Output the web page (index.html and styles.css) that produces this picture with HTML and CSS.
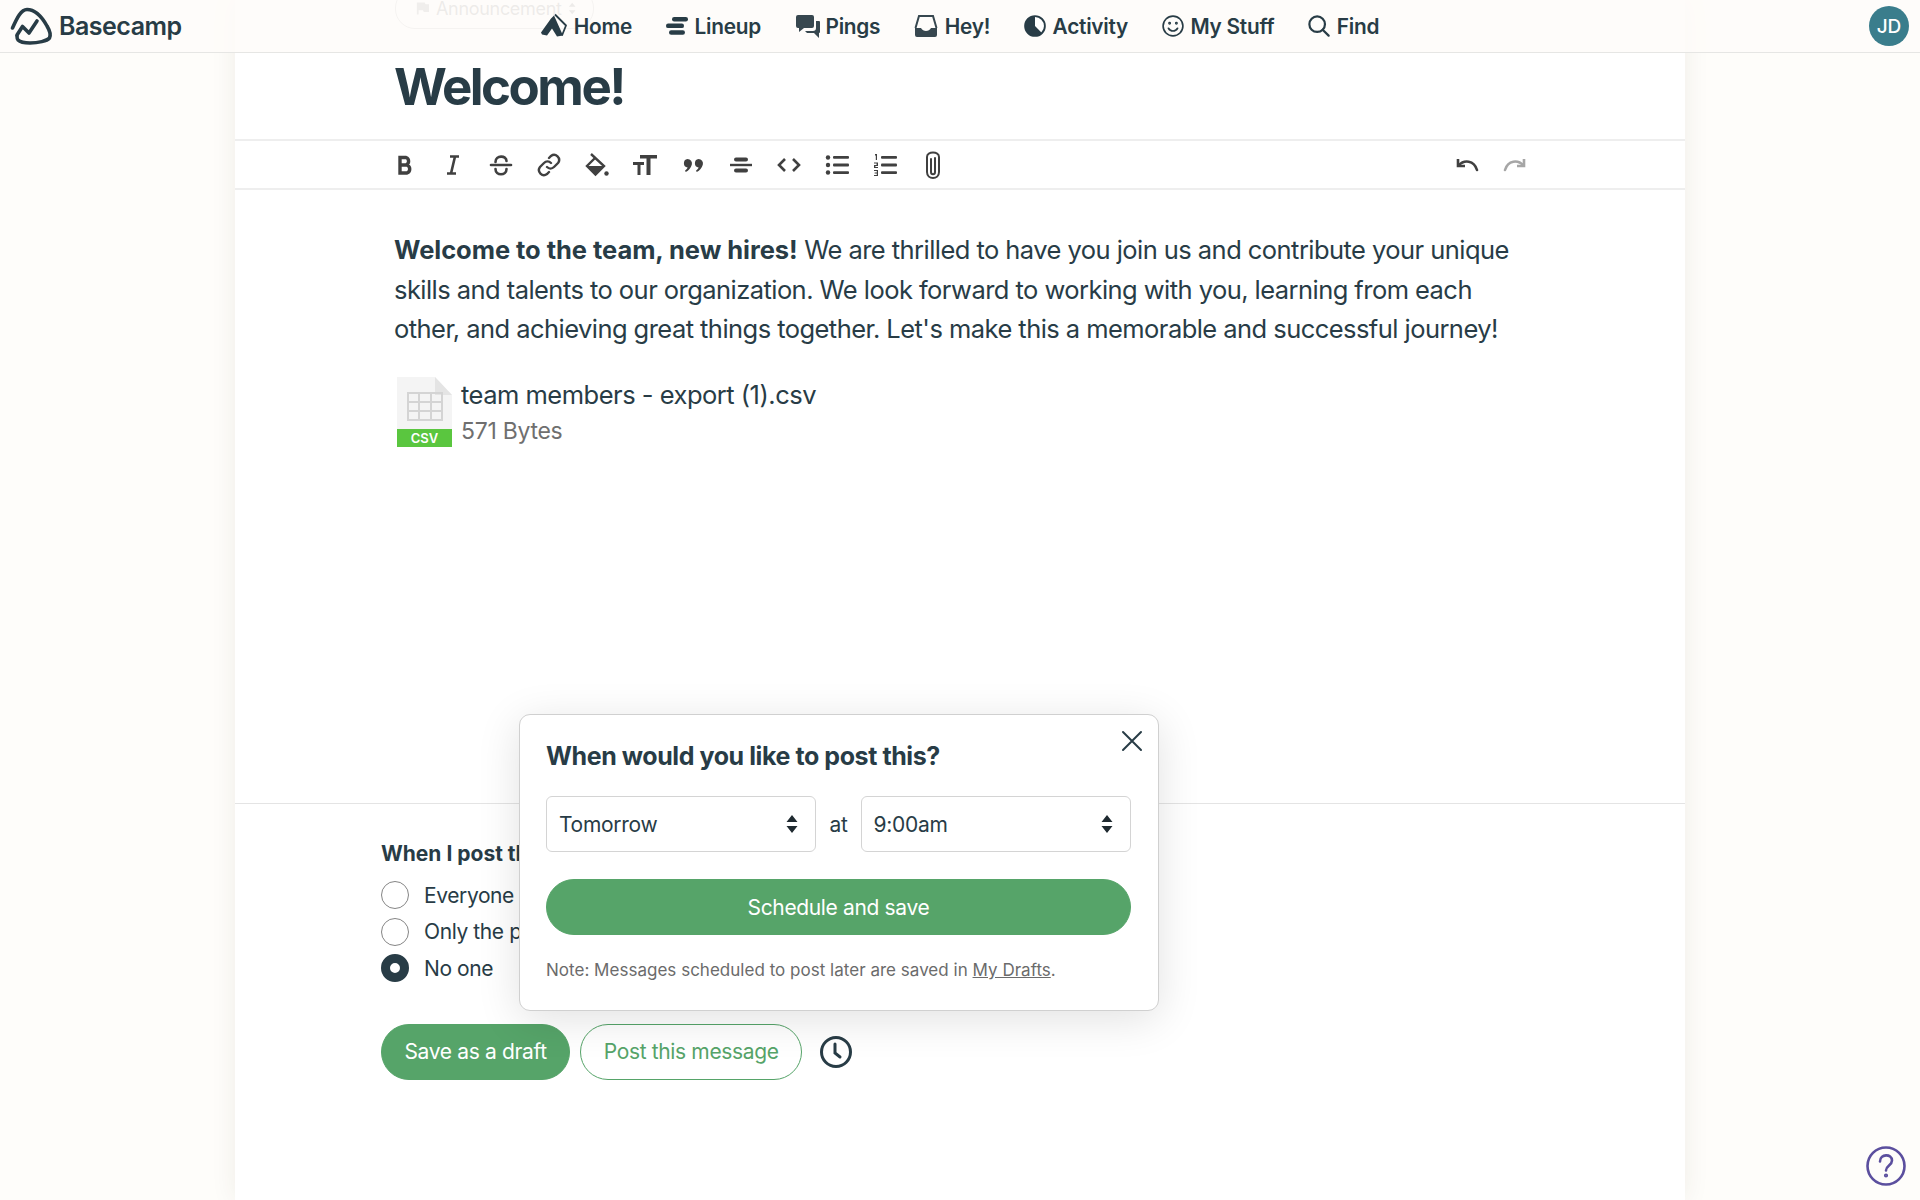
FILE: index.html
```html
<!DOCTYPE html>
<html>
  <head>
    <title>Welcome! - Basecamp</title>
    <link rel="stylesheet" href="styles.css">
  </head>
  <body>
    <header class="nav">
      <a class="brand">
        <svg class="brand-logo" viewBox="10 7 45 38" fill="none" stroke="#283c46" stroke-width="3.600" stroke-linecap="round" stroke-linejoin="round">
          <path d="M12.500 28C17 18 21 9.500 27 9.500c8 0 15 7.500 20 16.500 3 5 4 9 2.500 12-2.500 3-11.500 5-19.500 5-6 0-10-1-12-3-1-1-1-3-1-4"/>
          <path d="M17 35l5.500-8.500L29 33l8-12"/>
        </svg>
        <span>Basecamp</span>
      </a>
      <nav class="nav-items">
        <a class="nav-item">
          <svg viewBox="11 9.500 26 24" width="26" height="26"><path fill="#283c46" d="M11 28l10-14 3-3 9 20-6 1-5-8-5 7-5-1z"/><path fill="none" stroke="#283c46" stroke-width="1.800" stroke-linejoin="round" d="M25 10l11 11-4 10"/></svg>
          Home
        </a>
        <a class="nav-item">
          <svg viewBox="0 0 22 20" width="22" height="20" fill="#283c46"><rect x="6" y="1" width="16" height="4.500" rx="2.200"/><rect x="0" y="7.600" width="18" height="4.500" rx="2.200"/><rect x="3" y="14.200" width="16" height="4.500" rx="2.200"/></svg>
          Lineup
        </a>
        <a class="nav-item nav-item-tight">
          <svg viewBox="0 0 26 26" width="26" height="26" fill="#37474f"><path d="M3 2h14a2 2 0 0 1 2 2v9a2 2 0 0 1-2 2H9l-5 4v-4H3a2 2 0 0 1-2-2V4a2 2 0 0 1 2-2z"/><path d="M21 8h3a1 1 0 0 1 1 1v10a1 1 0 0 1-1 1v5l-5-5h-7l-2-2h8a3 3 0 0 0 3-3z"/></svg>
          Pings
        </a>
        <a class="nav-item">
          <svg viewBox="0 0 24 24" width="24" height="24"><path fill="#37474f" d="M1 14h6c1 2 3 3 5 3s4-1 5-3h6v7a2 2 0 0 1-2 2H3a2 2 0 0 1-2-2z"/><path fill="none" stroke="#37474f" stroke-width="2" d="M1.500 14L5 2h14l3.500 12"/></svg>
          Hey!
        </a>
        <a class="nav-item">
          <svg viewBox="0 0 24 24" width="22" height="22"><circle cx="12" cy="12" r="10.800" fill="#fff" stroke="#283c46" stroke-width="2"/><path fill="#283c46" d="M12 1a11 11 0 1 0 7.800 18.800L12 12z"/></svg>
          Activity
        </a>
        <a class="nav-item">
          <svg viewBox="0 0 24 24" width="22" height="22" fill="none" stroke="#283c46" stroke-width="1.800" stroke-linecap="round"><circle cx="12" cy="12" r="10.800"/><path d="M7 14.500c1.200 2 3 3 5 3s3.800-1 5-3"/><circle cx="8.300" cy="9" r=".7"/><circle cx="15.700" cy="9" r=".7"/></svg>
          My Stuff
        </a>
        <a class="nav-item">
          <svg viewBox="0 0 24 24" width="22" height="22" fill="none" stroke="#283c46" stroke-width="2.400" stroke-linecap="round"><circle cx="10" cy="10" r="8.500"/><path d="M16 16l6.500 6.500"/></svg>
          Find
        </a>
      </nav>
      <div class="nav-end">
        <span class="avatar">JD</span>
      </div>
    </header>

    <main class="card">
      <div class="pill">
        <svg viewBox="0 0 16 16" width="15" height="15" fill="#999"><path d="M1 1h9l1 2h4v9H9l-1-2H3v5H1z"/></svg>
        <span>Announcement</span>
        <svg class="pill-arrows" viewBox="0 0 10 16" width="9" height="15" fill="#888"><path d="M5 1l4 5H1zM5 15L1 10h8z"/></svg>
      </div>

      <h1 class="title">Welcome!</h1>

      <div class="toolbar">
        <div class="tool-group">
          <span class="tool"><svg viewBox="0 0 24 24"><path fill="none" stroke="#404040" stroke-width="3.400" d="M7 4.500h6a4 4 0 0 1 0 7.500H7zM7 12h7a4.300 4.300 0 0 1 0 8H7zM7 3v18.500"/></svg></span>
          <span class="tool"><svg viewBox="0 0 24 24"><path fill="none" stroke="#404040" stroke-width="2.600" d="M9 3.500h9M6 20.500h9M14 3.500l-4 17"/></svg></span>
          <span class="tool"><svg viewBox="0 0 24 24" fill="none" stroke="#404040" stroke-width="2.600" stroke-linecap="round"><path d="M2 12h20"/><path d="M6.500 9C6.500 2 17.500 2 17.500 8M6.500 16c0 7 11 7 11 0"/></svg></span>
          <span class="tool"><svg viewBox="0 0 24 24" fill="none" stroke="#404040" stroke-width="2.400" stroke-linecap="round"><path d="M10 14a5 5 0 0 0 7 0l4-4a5 5 0 0 0-7-7l-2 2"/><path d="M14 10a5 5 0 0 0-7 0l-4 4a5 5 0 0 0 7 7l2-2"/></svg></span>
          <span class="tool"><svg viewBox="0 0 24 24"><path fill="none" stroke="#404040" stroke-width="2.400" d="M6 1l13 12-8.500 8.500L2 13 10 5"/><path fill="#404040" d="M2 13h17l-8.500 8.800z"/><circle cx="21.500" cy="20.500" r="2.200" fill="#404040"/></svg></span>
          <span class="tool"><svg viewBox="0 0 24 24" fill="#404040"><path d="M7 2h17v3.500h-6.500V22h-4V5.500H7z"/><path d="M0 9h11v3H7.500v10h-3V12H0z"/></svg></span>
          <span class="tool"><svg viewBox="0 0 24 24" fill="#404040"><path d="M6.500 6a4.500 4.500 0 0 1 4.300 5.800C9.800 15 7.800 17.500 4.800 19l-.8-1.300c1.500-1.200 2.300-2.300 2.600-3.200A4.300 4.300 0 0 1 6.500 6z"/><path d="M17.500 6a4.500 4.500 0 0 1 4.300 5.800c-1 3.200-3 5.700-6 7.200l-.8-1.300c1.500-1.200 2.300-2.300 2.600-3.200a4.300 4.300 0 0 1-.1-8.500z"/></svg></span>
          <span class="tool"><svg viewBox="0 0 24 24" fill="#404040"><rect x="5" y="4.500" width="14" height="4" rx="2"/><rect x="1" y="10.800" width="22" height="2.400"/><rect x="5" y="15.500" width="14" height="4" rx="2"/></svg></span>
          <span class="tool"><svg viewBox="0 0 24 24" fill="none" stroke="#404040" stroke-width="2.600"><path d="M8 6l-6 6 6 6M16 6l6 6-6 6"/></svg></span>
          <span class="tool"><svg viewBox="0 0 24 24" fill="#404040"><circle cx="3" cy="4.500" r="2.200"/><circle cx="3" cy="12" r="2.200"/><circle cx="3" cy="19.500" r="2.200"/><rect x="8" y="3" width="16" height="2.800" rx="1"/><rect x="8" y="10.600" width="16" height="2.800" rx="1"/><rect x="8" y="18.200" width="16" height="2.800" rx="1"/></svg></span>
          <span class="tool"><svg viewBox="0 0 24 24" fill="#404040"><rect x="8" y="3" width="16" height="2.800" rx="1"/><rect x="8" y="10.600" width="16" height="2.800" rx="1"/><rect x="8" y="18.200" width="16" height="2.800" rx="1"/><path d="M2 1h2v6H2.800V2.400H2zM1 9.500h4v3.400H2.400v1.200H5v1H1v-3h2.600v-1.600H1zM1 17h4v6H1v-1h2.800v-1.600H1.600v-.8h2.200V18H1z"/></svg></span>
          <span class="tool"><svg viewBox="0 0 24 28" class="tool-tall" fill="none" stroke="#404040" stroke-width="2" stroke-linecap="round"><path d="M6 6v15c0 8 12 8 12 0V6c0-6-12-6-12 0z"/><path d="M10 8v13c0 3 4 3 4 0V7"/></svg></span>
        </div>
        <div class="tool-group">
          <span class="tool"><svg viewBox="0 0 24 24" fill="none" stroke="#404040" stroke-width="2.600"><path d="M3 6v7h7"/><path stroke-linecap="round" d="M3.500 12.500C9 6.500 19 7 22 17"/></svg></span>
          <span class="tool"><svg viewBox="0 0 24 24" fill="none" stroke="#a6a6a6" stroke-width="2.600"><path d="M21 6v7h-7"/><path stroke-linecap="round" d="M20.500 12.500C15 6.500 5 7 2 17"/></svg></span>
        </div>
      </div>

      <section class="editor">
        <p class="lead"><b>Welcome to the team, new hires!</b> We are thrilled to have you join us and contribute your unique skills and talents to our organization. We look forward to working with you, learning from each other, and achieving great things together. Let's make this a memorable and successful journey!</p>
        <div class="attachment">
          <div class="file-icon">
            <svg viewBox="0 0 55 70" width="55" height="70">
              <path fill="#f4f4f4" d="M0 0h38l17 18v34H0z"/>
              <path fill="#e4e4e4" d="M38 0l17 18H38z"/>
              <path fill="none" stroke="#d4d4d4" stroke-width="2" d="M11 16h34v27H11zM11 25h34M11 34h34M22 16v27M34 16v27"/>
              <rect y="52" width="55" height="18" fill="#5ac63f"/>
            </svg>
            <span class="file-ext">CSV</span>
          </div>
          <div class="file-meta">
            <div class="file-name">team members - export (1).csv</div>
            <div class="file-size">571 Bytes</div>
          </div>
        </div>
      </section>

      <section class="options">
        <h3 class="options-title">When I post this, notify…</h3>
        <label class="radio"><span class="radio-dot"></span>Everyone who can see this</label>
        <label class="radio"><span class="radio-dot"></span>Only the people I select</label>
        <label class="radio"><span class="radio-dot is-on"></span>No one</label>
        <div class="actions">
          <button class="btn btn-solid">Save as a draft</button>
          <button class="btn btn-line">Post this message</button>
          <svg class="clock" viewBox="0 0 32 32" width="32" height="32" fill="none" stroke="#283c46" stroke-width="3" stroke-linecap="round"><circle cx="16" cy="16" r="14.500"/><path d="M15 8v9l5 4"/></svg>
        </div>
      </section>
    </main>

    <div class="popover">
      <svg class="close" viewBox="0 0 22 22" width="22" height="22" fill="none" stroke="#283c46" stroke-width="2" stroke-linecap="round"><path d="M2 2l18 18M20 2L2 20"/></svg>
      <h2 class="popover-title">When would you like to post this?</h2>
      <div class="when">
        <div class="select">Tomorrow<svg viewBox="0 0 12 20" width="12" height="20" fill="#1f2a30"><path d="M6 1l5.500 7H.5zM6 19L.5 12h11z"/></svg></div>
        <span>at</span>
        <div class="select">9:00am<svg viewBox="0 0 12 20" width="12" height="20" fill="#1f2a30"><path d="M6 1l5.500 7H.5zM6 19L.5 12h11z"/></svg></div>
      </div>
      <button class="btn btn-solid btn-wide">Schedule and save</button>
      <p class="note">Note: Messages scheduled to post later are saved in <a>My Drafts</a>.</p>
    </div>

    <svg class="help" viewBox="0 0 40 40" width="40" height="40" fill="none" stroke="#5b4f9e" stroke-width="2.600" stroke-linecap="round"><circle cx="20" cy="20" r="18.500"/><path d="M14 15.500c0-8 12-8 12-1 0 5-6 5-6 10"/><circle cx="20" cy="29.500" r=".8" fill="#5b4f9e"/></svg>
  </body>
</html>
```

FILE: styles.css
```css
* {
  box-sizing: border-box;
}

body {
  margin: 0;
  height: 1200px;
  overflow: hidden;
  position: relative;
  background: #fefdfa;
  color: #283c46;
  font-family: Inter, "Liberation Sans", sans-serif;
}

.nav {
  position: absolute;
  top: 0;
  left: 0;
  right: 0;
  z-index: 5;
  height: 53px;
  display: grid;
  grid-template-columns: 1fr auto 1fr;
  align-items: center;
  background: rgba(254, 252, 249, 0.86);
  border-bottom: 1px solid #e6e6e4;
}

.brand {
  display: flex;
  align-items: center;
  gap: 4px;
  padding-left: 10px;
  font-size: 25px;
  font-weight: 600;
  letter-spacing: -0.5px;
}

.brand-logo {
  width: 45px;
  height: 38px;
}

.nav-items {
  display: flex;
  align-items: center;
  gap: 33.500px;
}

.nav-item {
  display: flex;
  align-items: center;
  gap: 7px;
  font-size: 20.800px;
  font-weight: 600;
  letter-spacing: -0.25px;
}

.nav-item-tight {
  gap: 5px;
}

.nav-end {
  display: flex;
  justify-content: flex-end;
  padding-right: 11px;
}

.avatar {
  width: 40px;
  height: 40px;
  border-radius: 50%;
  background: #3a7d8c;
  color: #fff;
  display: flex;
  align-items: center;
  justify-content: center;
  font-size: 19px;
  font-weight: 500;
}

.card {
  width: 1450px;
  height: 1200px;
  margin: 0 auto;
  background: #fff;
  box-shadow: 0 0 24px rgba(60, 50, 30, 0.08);
}

.pill {
  position: absolute;
  top: -12px;
  left: 395px;
  width: 199px;
  height: 41px;
  padding: 0 17px 0 20px;
  display: flex;
  align-items: center;
  gap: 6px;
  border: 1px solid #bbb;
  border-radius: 20px;
  color: #888;
  font-size: 18px;
  letter-spacing: -0.3px;
}

.pill-arrows {
  margin-left: auto;
}

.title {
  margin: 0;
  padding: 54px 0 0 159px;
  height: 139px;
  font-size: 51px;
  line-height: 66px;
  font-weight: 700;
  letter-spacing: -2.500px;
}

.toolbar {
  height: 51px;
  padding: 0 146px;
  display: flex;
  justify-content: space-between;
  align-items: center;
  border-top: 2px solid #eeeeee;
  border-bottom: 2px solid #eeeeee;
}

.tool-group {
  display: flex;
}

.tool {
  width: 48px;
  height: 46px;
  display: flex;
  align-items: center;
  justify-content: center;
}

.tool svg {
  width: 24px;
  height: 24px;
}

.tool svg.tool-tall {
  height: 28px;
}

.editor {
  height: 614px;
  padding: 40px 160px 0 159px;
  border-bottom: 1px solid #e4e4e4;
}

.lead {
  margin: 0 0 28px;
  font-size: 25.500px;
  line-height: 39.600px;
  letter-spacing: -0.55px;
}

.lead b {
  letter-spacing: -0.05px;
}

.attachment {
  display: flex;
  gap: 10px;
  padding-left: 3px;
}

.file-icon {
  position: relative;
  width: 55px;
  height: 70px;
}

.file-ext {
  position: absolute;
  left: 0;
  right: 0;
  bottom: 1px;
  text-align: center;
  color: #fff;
  font-size: 13px;
  font-weight: 600;
}

.file-name {
  margin-left: -1px;
  font-size: 25.500px;
  line-height: 36px;
  letter-spacing: -0.5px;
}

.file-size {
  margin-left: -1px;
  font-size: 23px;
  line-height: 36px;
  letter-spacing: -0.28px;
  color: #6f6f6f;
}

.options {
  padding: 37px 146px 0;
}

.options-title {
  margin: 0 0 10px;
  font-size: 21px;
  line-height: 26px;
  font-weight: 700;
}

.radio {
  display: flex;
  align-items: center;
  gap: 15px;
  height: 36.500px;
  font-size: 21px;
  letter-spacing: -0.4px;
}

.radio-dot {
  width: 28px;
  height: 28px;
  border-radius: 50%;
  border: 1.500px solid #858585;
  background: #fff;
}

.radio-dot.is-on {
  border: 9px solid #283c46;
}

.actions {
  display: flex;
  align-items: center;
  gap: 10px;
  margin-top: 37px;
}

.btn {
  height: 56px;
  padding: 0 22.500px;
  border-radius: 28px;
  border: 1px solid #56a469;
  font-family: inherit;
  font-size: 21px;
  letter-spacing: -0.35px;
}

.btn-solid {
  background: #56a469;
  color: #fff;
}

.btn-line {
  background: #fff;
  color: #56a469;
}

.clock {
  margin-left: 8px;
}

.popover {
  position: absolute;
  z-index: 3;
  left: 519px;
  top: 714px;
  width: 640px;
  height: 297px;
  padding: 25px 27px 25px 26px;
  background: #fff;
  border: 1px solid #d0d0d0;
  border-radius: 11px;
  box-shadow: 0 8px 44px rgba(0, 0, 0, 0.12);
}

.close {
  position: absolute;
  top: 15px;
  right: 15px;
}

.popover-title {
  margin: 0 0 24px;
  font-size: 25px;
  line-height: 32px;
  font-weight: 700;
  letter-spacing: -0.42px;
}

.when {
  display: flex;
  align-items: center;
  gap: 13px;
  font-size: 21px;
  letter-spacing: -0.3px;
}

.select {
  flex: 1;
  height: 56px;
  padding: 0 17px 0 12px;
  display: flex;
  align-items: center;
  justify-content: space-between;
  border: 1px solid #d4d4d4;
  border-radius: 6px;
}

.btn-wide {
  display: block;
  width: 100%;
  margin-top: 27px;
}

.note {
  margin: 23px 0 0;
  font-size: 17px;
  line-height: 24px;
  letter-spacing: 0.02px;
  color: #6b6b6b;
}

.note a {
  text-decoration: underline;
}

.help {
  position: absolute;
  right: 14px;
  bottom: 14px;
}
```
